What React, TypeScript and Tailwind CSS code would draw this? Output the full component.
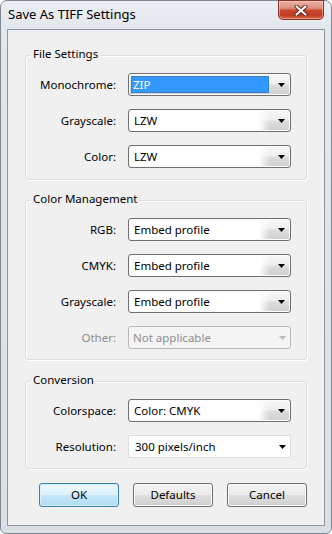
import React from "react";

type Variant = "normal" | "selected" | "disabled" | "flat";

function Arrow({ color }: { color: string }) {
  return (
    <svg width="7" height="4" viewBox="0 0 7 4">
      <path d="M0 0H7L3.5 4Z" fill={color} />
    </svg>
  );
}

function Combo({ value, variant = "normal" }: { value: string; variant?: Variant }) {
  if (variant === "disabled") {
    return (
      <div className="ml-[12px] flex h-[23px] w-[163px] rounded-[3px] border border-[#b5b9bc] bg-[#f4f4f4]">
        <div className="flex flex-1 items-center pl-[4px] text-[#8d8d8d]">{value}</div>
        <div className="flex w-[19px] items-center pl-[8px]">
          <Arrow color="#b8b8b8" />
        </div>
      </div>
    );
  }
  if (variant === "flat") {
    return (
      <div className="ml-[12px] flex h-[23px] w-[163px] rounded-[1px] border border-[#dcdcdc] bg-white">
        <div className="flex flex-1 items-center pl-[6px]">{value}</div>
        <div className="flex w-[19px] items-center pl-[8px]">
          <Arrow color="#000" />
        </div>
      </div>
    );
  }
  return (
    <div className="ml-[12px] flex h-[23px] w-[163px] rounded-[3px] border border-[#707070] bg-[linear-gradient(180deg,#f7f7f7_0%,#eeeeee_45%,#dcdcdc_55%,#cfcfcf_100%)] p-[1px] shadow-[inset_0_0_0_1px_#fcfcfc]">
      {variant === "selected" ? (
        <div className="flex flex-1 p-[1px]">
          <div className="flex flex-1 items-center border border-dotted border-[#2c6cb5] bg-[#3399ff] pl-[1px] text-white">
            {value}
          </div>
        </div>
      ) : (
        <div className="flex flex-1 items-center bg-[linear-gradient(90deg,#ffffff_92%,rgba(255,255,255,0))] pl-[4px]">
          {value}
        </div>
      )}
      <div className="flex w-[19px] shrink-0 items-center pl-[8px]">
        <Arrow color="#000" />
      </div>
    </div>
  );
}

function Row({
  label,
  value,
  variant,
  disabled,
}: {
  label: string;
  value: string;
  variant?: Variant;
  disabled?: boolean;
}) {
  return (
    <div className="flex h-[23px] items-center">
      <div className={"w-[90px] text-right " + (disabled ? "text-[#8d8d8d]" : "text-black")}>{label}</div>
      <Combo value={value} variant={variant} />
    </div>
  );
}

function Group({
  title,
  children,
  className,
}: {
  title: string;
  children: React.ReactNode;
  className: string;
}) {
  return (
    <div
      className={
        "relative w-[282px] rounded-[3px] border border-[#d5dfe5] shadow-[inset_1px_1px_0_#ffffff,1px_1px_0_#ffffff] flex flex-col gap-[13px] " +
        className
      }
    >
      <div className="absolute left-[5px] top-[-10px] bg-[#f0f0f0] px-[2px] leading-[16px] text-black">
        {title}
      </div>
      {children}
    </div>
  );
}

function Button({ label, primary }: { label: string; primary?: boolean }) {
  return (
    <div
      className={
        "flex h-[24px] w-[80px] items-center justify-center rounded-[3px] border text-black " +
        (primary
          ? "border-[#3c7fb1] bg-[linear-gradient(180deg,#eef8fe_0%,#dcf1fc_48%,#c4e6f8_52%,#b2dcf3_100%)] shadow-[inset_0_0_0_1px_#d8f0fd]"
          : "border-[#707070] bg-[linear-gradient(180deg,#f4f4f4_0%,#ebebeb_48%,#dddddd_52%,#cfcfcf_100%)] shadow-[inset_0_0_0_1px_#fafafa]")
      }
    >
      {label}
    </div>
  );
}

function CloseButton() {
  return (
    <div className="absolute right-[7px] top-[-1px] flex h-[20px] w-[46px] items-center justify-center rounded-b-[5px] border border-[#83352a] bg-[linear-gradient(180deg,#eab0a3_0%,#dd8e7e_40%,#c9492f_52%,#c03a22_78%,#d8674a_100%)] shadow-[inset_0_0_0_1px_rgba(255,220,210,0.45)]">
      <svg width="14" height="11" viewBox="0 0 14 11">
        <path d="M2.5 1.5L11.5 9.5M11.5 1.5L2.5 9.5" stroke="#5b2118" strokeWidth="4" strokeLinecap="round" />
        <path d="M2.5 1.5L11.5 9.5M11.5 1.5L2.5 9.5" stroke="#ffffff" strokeWidth="2.2" strokeLinecap="round" />
      </svg>
    </div>
  );
}

export default function App() {
  return (
    <div
      className="relative flex h-[534px] w-[332px] flex-col rounded-t-[7px] rounded-b-[6px] border border-[#7d8893] bg-[linear-gradient(180deg,#ebeef2_0%,#e2e7ec_30px,#d9dfe5_100%)] text-[11.5px] text-black"
      style={{ fontFamily: '"Noto Sans", "DejaVu Sans", sans-serif' }}
    >
      <div className="flex h-[28px] shrink-0 items-center pb-[2px] pl-[7px] text-[13px] leading-[18px]">
        Save As TIFF Settings
      </div>
      <CloseButton />
      <div className="mx-[6px] mb-[7px] flex flex-1 flex-col border border-[#8a96a2] bg-[#f0f0f0] pl-[17px] pt-[25px]">
        <Group title="File Settings" className="pt-[17px] pb-[11px]">
          <Row label="Monochrome:" value="ZIP" variant="selected" />
          <Row label="Grayscale:" value="LZW" />
          <Row label="Color:" value="LZW" />
        </Group>
        <Group title="Color Management" className="mt-[20px] pt-[17px] pb-[10px]">
          <Row label="RGB:" value="Embed profile" />
          <Row label="CMYK:" value="Embed profile" />
          <Row label="Grayscale:" value="Embed profile" />
          <Row label="Other:" value="Not applicable" variant="disabled" disabled />
        </Group>
        <Group title="Conversion" className="mt-[21px] pt-[17px] pb-[10px]">
          <Row label="Colorspace:" value="Color: CMYK" />
          <Row label="Resolution:" value="300 pixels/inch" variant="flat" />
        </Group>
        <div className="mt-[14px] flex w-[282px] justify-end gap-[14px]">
          <Button label="OK" primary />
          <Button label="Defaults" />
          <Button label="Cancel" />
        </div>
      </div>
    </div>
  );
}
